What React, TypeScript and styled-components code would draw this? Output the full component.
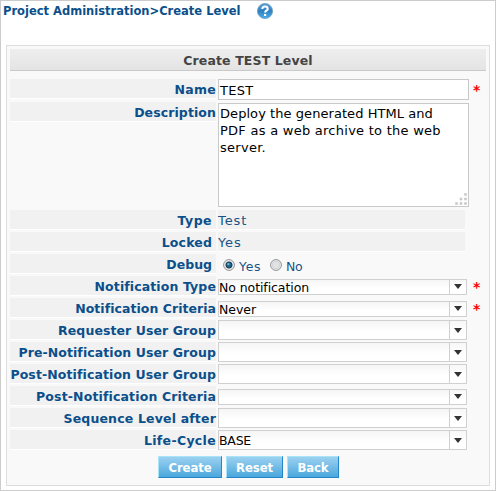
import React from 'react';
import styled, { createGlobalStyle } from 'styled-components';

const GlobalStyle = createGlobalStyle`
  * { box-sizing: border-box; }
  body { margin: 0; background: #fff; font-family: "DejaVu Sans", Verdana, sans-serif; }
`;

const Page = styled.main`
  width: 496px;
  height: 491px;
  border: 1px solid #ccc;
  padding-left: 5px;
  overflow: hidden;
  white-space: nowrap;
`;

const Breadcrumb = styled.header`
  display: flex;
  height: 44px;
`;

const Crumb = styled.h1`
  width: 253px;
  height: 20px;
  margin: 0 0 0 -3px;
  font-size: 11.5px;
  line-height: 20px;
  letter-spacing: 0;
  color: #0b4f8a;
`;

const HelpIcon = styled.svg`
  margin-top: 1px;
  width: 18px;
  height: 18px;
`;

const Panel = styled.section`
  width: 484px;
  height: 441px;
  border: 1px solid #ddd;
  background: #f9f9f9;
  padding: 3px;
`;

const PanelTitle = styled.h2`
  height: 22px;
  margin: 0 0 8px;
  border-bottom: 1px solid #c9c9c9;
  background: linear-gradient(#eee, #e4e4e4);
  color: #444;
  font-size: 12.5px;
  line-height: 24px;
  letter-spacing: 0.13px;
  text-align: center;
`;

const Row = styled.div<{ $height?: number }>`
  display: grid;
  grid-template-columns: 206px 251px 1fr;
  column-gap: 2px;
  align-items: start;
  height: ${(p) => p.$height ?? 22}px;
`;

const Label = styled.label<{ $track: number; $inset?: boolean }>`
  display: block;
  height: 20px;
  padding-right: ${(p) => (p.$inset ? 4 : 0)}px;
  border-bottom: 1px solid #fff;
  background: #f1f1f1;
  color: #0b4f8a;
  font-size: 12.5px;
  font-weight: bold;
  line-height: 21px;
  letter-spacing: ${(p) => p.$track}px;
  text-align: right;
`;

const NameBox = styled.div`
  height: 21px;
  padding-left: 1px;
  border: 1px solid #c9c9c9;
  background: #fff;
  font-size: 13px;
  line-height: 22px;
  letter-spacing: 0.3px;
`;

const DescriptionBox = styled.div`
  position: relative;
  height: 104px;
  margin-top: 1px;
  padding: 1px 0 0 1px;
  border: 1px solid #c9c9c9;
  background: #fff;
  font-size: 13px;
  line-height: 17px;
`;

const TextLine = styled.div<{ $track: number }>`
  letter-spacing: ${(p) => p.$track}px;
`;

const Grip = styled.svg`
  position: absolute;
  right: 1px;
  bottom: 1px;
  width: 12px;
  height: 12px;
  fill: #c4c4c4;
`;

const Value = styled.div`
  width: 247px;
  height: 20px;
  border-bottom: 1px solid #fff;
  background: #f1f1f1;
  color: #1b5385;
  font-size: 13px;
  line-height: 21px;
  letter-spacing: 0.9px;
`;

const RadioGroup = styled.div`
  display: flex;
  align-items: flex-start;
  padding-left: 5px;
  color: #1b5385;
  font-size: 12.5px;
  line-height: 25px;
`;

const RadioText = styled.span<{ $width: number; $track: number }>`
  width: ${(p) => p.$width}px;
  margin-left: 4px;
  letter-spacing: ${(p) => p.$track}px;
`;

const RadioMark = styled.svg`
  flex: none;
  width: 12px;
  height: 12px;
  margin-top: 5px;
`;

const SelectBox = styled.div<{ $short?: boolean }>`
  display: flex;
  width: 249px;
  height: ${(p) => (p.$short ? 16 : 20)}px;
  margin-top: ${(p) => (p.$short ? 3 : 0)}px;
  border: 1px solid #d0d0d0;
  background: linear-gradient(#f5f5f5, #fff 60%);
`;

const SelectText = styled.span<{ $track: number; $short?: boolean }>`
  flex: 1;
  font-size: 12.5px;
  line-height: ${(p) => (p.$short ? 16 : 19)}px;
  letter-spacing: ${(p) => p.$track}px;
`;

const SelectButton = styled.span<{ $short?: boolean }>`
  display: flex;
  align-items: center;
  justify-content: center;
  width: 17px;
  padding-bottom: ${(p) => (p.$short ? 1 : 0)}px;
  border-left: 1px solid #d0d0d0;
  background: linear-gradient(#f7f7f7, #fff 60%);
`;

const Required = styled.span`
  padding-left: 2px;
  color: #f00;
  font-size: 14px;
  font-weight: bold;
  line-height: 22px;
`;

const Actions = styled.div`
  display: flex;
  gap: 4px;
  padding: 4px 0 0 148px;
`;

const Button = styled.button<{ $width: number }>`
  width: ${(p) => p.$width}px;
  height: 22px;
  padding: 0;
  border: 1px solid;
  border-color: #a8e4f8 #2386c8 #2386c8 #a8e4f8;
  background: linear-gradient(#9bd1f0, #4ba7dc);
  color: #fff;
  font: bold 11.7px/22px "DejaVu Sans", Verdana, sans-serif;
  letter-spacing: -0.1px;
`;

function Help() {
  return (
    <HelpIcon viewBox="0 0 18 18">
      <defs>
        <linearGradient id="help" x1="0" y1="0" x2="0" y2="1">
          <stop offset="0" stopColor="#5d9fd1" />
          <stop offset="0.5" stopColor="#2e80c2" />
          <stop offset="1" stopColor="#4db0e8" />
        </linearGradient>
      </defs>
      <circle cx="9" cy="9" r="7.6" fill="url(#help)" stroke="#6f9fc2" strokeWidth="0.8" />
      <path d="M6.3 6.9C6.3 3.7 11.7 3.7 11.7 6.9C11.7 8.7 9.1 8.7 9.1 10.5" fill="none" stroke="#fff" strokeWidth="2.1" />
      <rect x="8" y="11.9" width="2.2" height="2.1" fill="#fff" />
    </HelpIcon>
  );
}

function Radio({ checked }: { checked?: boolean }) {
  return (
    <RadioMark viewBox="0 0 12 12">
      <circle cx="6" cy="6" r="5.4" fill="#f6f6f6" stroke="#8d8f90" />
      <circle cx="6" cy="6" r="3.9" fill="#e2e2e2" stroke="#c6cacd" strokeWidth="0.7" />
      {checked && <circle cx="6" cy="6" r="3" fill="#1d6388" stroke="#173a56" />}
      {checked && <circle cx="5.4" cy="5.2" r="1.1" fill="#74c6e6" />}
    </RadioMark>
  );
}

function Select({ text, track = 0, short }: { text?: string; track?: number; short?: boolean }) {
  return (
    <SelectBox $short={short}>
      <SelectText $track={track} $short={short}>{text}</SelectText>
      <SelectButton $short={short}>
        <svg width="8" height="5" viewBox="0 0 8 5"><path d="M0 0H8L4 5Z" fill="#333" /></svg>
      </SelectButton>
    </SelectBox>
  );
}

interface SelectRow {
  label: string;
  labelTrack: number;
  text?: string;
  track?: number;
  short?: boolean;
  required?: boolean;
}

const selects: SelectRow[] = [
  { label: 'Notification Type', labelTrack: 0.11, text: 'No notification', track: -0.08, short: true, required: true },
  { label: 'Notification Criteria', labelTrack: 0.04, text: 'Never', track: -0.05, short: true, required: true },
  { label: 'Requester User Group', labelTrack: 0.08 },
  { label: 'Pre-Notification User Group', labelTrack: 0.08 },
  { label: 'Post-Notification User Group', labelTrack: 0.1 },
  { label: 'Post-Notification Criteria', labelTrack: 0.14, short: true },
  { label: 'Sequence Level after', labelTrack: 0.17 },
  { label: 'Life-Cycle', labelTrack: 0.32, text: 'BASE', track: -0.24 },
];

export default function App() {
  return (
    <>
      <GlobalStyle />
      <Page>
        <Breadcrumb>
          <Crumb>Project Administration&gt;Create Level</Crumb>
          <Help />
        </Breadcrumb>
        <Panel>
          <PanelTitle>Create TEST Level</PanelTitle>
          <Row $height={23}>
            <Label $track={0.25}>Name</Label>
            <NameBox>TEST</NameBox>
            <Required>*</Required>
          </Row>
          <Row $height={108}>
            <Label $track={0.09}>Description</Label>
            <DescriptionBox>
              <TextLine $track={0.06}>Deploy the generated HTML and</TextLine>
              <TextLine $track={0.26}>PDF as a web archive to the web</TextLine>
              <TextLine $track={0.27}>server.</TextLine>
              <Grip viewBox="0 0 12 12">
                <path d="M9.5 0.5h2v2h-2zM5 5h2v2h-2zM9.5 5h2v2h-2zM0.5 9.5h2v2h-2zM5 9.5h2v2h-2zM9.5 9.5h2v2h-2z" stroke="#d0d0d0" strokeWidth="0.8" />
              </Grip>
            </DescriptionBox>
          </Row>
          <Row>
            <Label $track={0.45} $inset>Type</Label>
            <Value>Test</Value>
          </Row>
          <Row>
            <Label $track={0.15} $inset>Locked</Label>
            <Value>Yes</Value>
          </Row>
          <Row>
            <Label $track={0} $inset>Debug</Label>
            <RadioGroup>
              <Radio checked />
              <RadioText $width={31} $track={0.7}>Yes</RadioText>
              <Radio />
              <RadioText $width={20} $track={-0.3}>No</RadioText>
            </RadioGroup>
          </Row>
          {selects.map((s) => (
            <Row key={s.label}>
              <Label $track={s.labelTrack}>{s.label}</Label>
              <Select text={s.text} track={s.track} short={s.short} />
              {s.required && <Required>*</Required>}
            </Row>
          ))}
          <Actions>
            <Button $width={64}>Create</Button>
            <Button $width={57}>Reset</Button>
            <Button $width={52}>Back</Button>
          </Actions>
        </Panel>
      </Page>
    </>
  );
}
